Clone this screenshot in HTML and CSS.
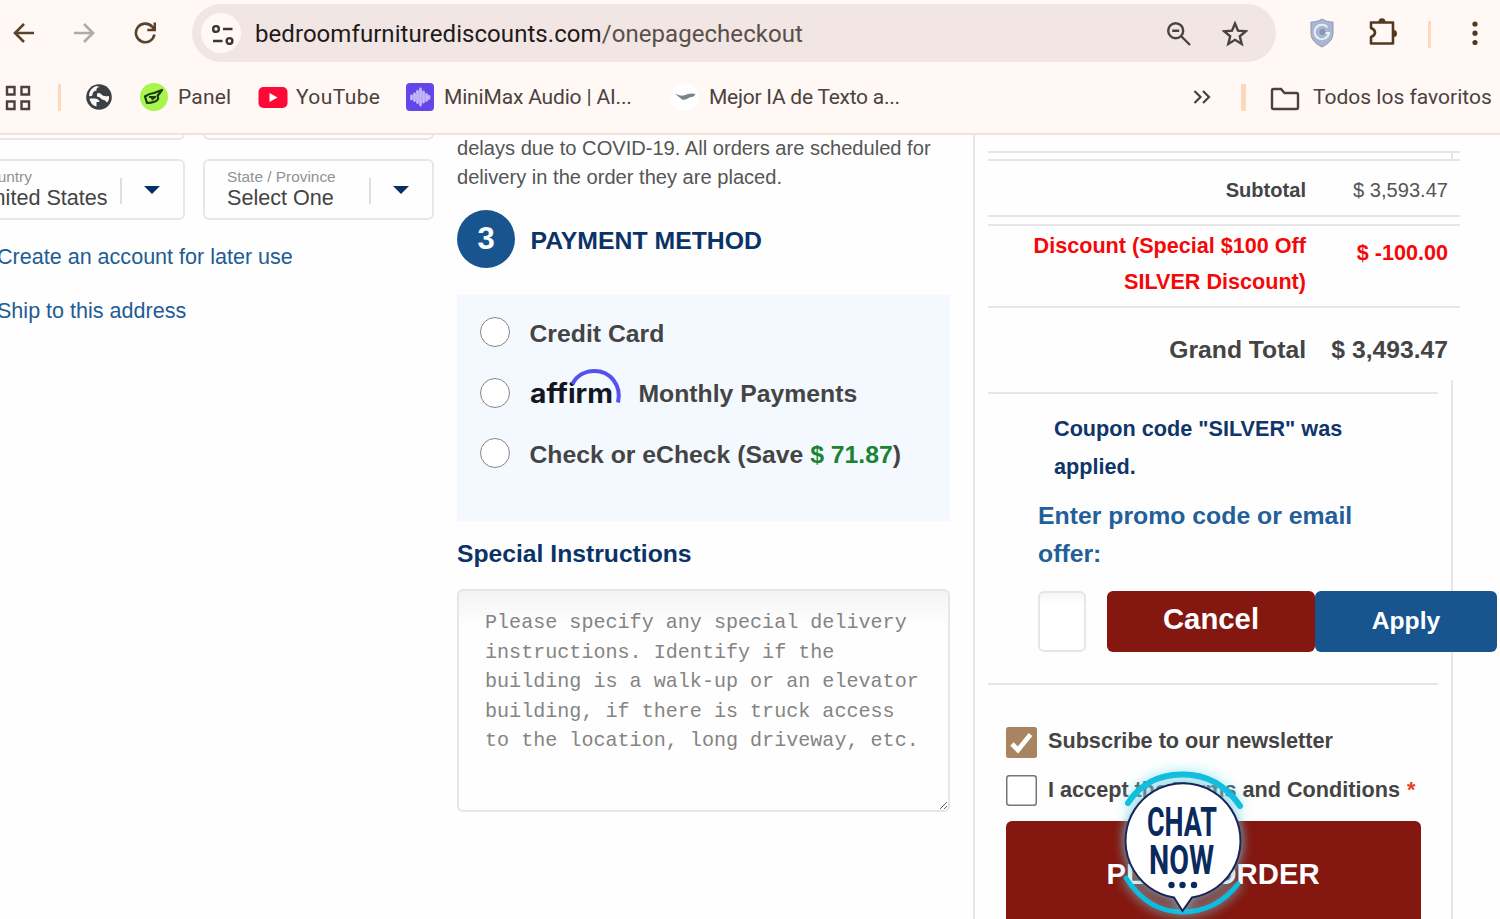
FILE: index.html
```html
<!DOCTYPE html>
<html lang="en">

<head>
    <meta charset="UTF-8">
    <meta name="viewport" content="width=device-width, initial-scale=1.0">
    <title>Checkout</title>
    <link rel="stylesheet" href="styles.css">
</head>

<body>
    <!-- browser bar -->
    <header class="browser">
        <div class="toolbar">
            <svg class="nav-icon back" viewBox="0 0 22 22"><path d="M21 11H2.5M11 2L2 11l9 9" /></svg>
            <svg class="nav-icon forward" viewBox="0 0 22 22"><path d="M1 11h18.500M11 2l9 9-9 9" /></svg>
            <svg class="nav-icon reload" viewBox="0 0 22 22"><path d="M20.400 12.500A9.300 9.300 0 1 1 18 4.500l2.600 3M20.800 0.500V8h-7.500" /></svg>
            <div class="address">
                <span class="site-info">
                    <svg viewBox="0 0 22 20"><circle cx="4" cy="4" r="2.900" /><path d="M11 4h9.500M1 16h9.500" /><circle cx="17.500" cy="16" r="2.900" /></svg>
                </span>
                <span class="url">bedroomfurniturediscounts.com<span class="path">/onepagecheckout</span></span>
                <svg class="zoom-icon" viewBox="0 0 24 24"><circle cx="8.700" cy="8.700" r="7.500" /><path d="M14 14l9 9M5.200 8.700h7" /></svg>
                <svg class="star-icon" viewBox="0 0 26 26"><path d="M13 2.500l3 7.200 7.800.6-6 5 1.900 7.700-6.700-4.200-6.700 4.200 1.900-7.700-6-5 7.800-.6z" /></svg>
            </div>
            <svg class="shield-icon" viewBox="0 0 24 30">
                <path d="M12 1c4 2.500 7.500 3 11 3v11c0 7-5 11-11 14C6 26 1 22 1 15V4c3.500 0 7-.5 11-3z" fill="#a9b6cf" stroke="#8d9ab5" />
                <path d="M17.500 9.500a7.200 7.200 0 1 0 1.500 5.500h-5" fill="none" stroke="#e9edf5" stroke-width="2" />
                <circle cx="12.500" cy="14" r="3" fill="#8696b6" />
            </svg>
            <svg class="puzzle-icon" viewBox="0 0 28 28">
                <path d="M2 4.500h22v21H2v-6.500q4-1.500 4-4.500T2 10z" fill="none" stroke="#51381f" stroke-width="2.600" stroke-linejoin="round" />
                <path d="M9.500 4a3.500 3.800 0 0 1 7 0zM24.500 12a3.500 3.500 0 0 1 0 7z" fill="#51381f" />
            </svg>
            <i class="sep"></i>
            <svg class="menu-icon" viewBox="0 0 6 24"><circle cx="3" cy="3" r="2.600" /><circle cx="3" cy="12.200" r="2.600" /><circle cx="3" cy="21.500" r="2.600" /></svg>
        </div>
        <div class="bookmarks">
            <svg class="apps-icon" viewBox="0 0 26 26"><path d="M2 2h7.500v7.500H2zM16.500 2H24v7.500h-7.500zM2 16.500h7.500V24H2zM16.500 16.500H24V24h-7.500z" /></svg>
            <i class="sep sep-apps"></i>
            <svg class="globe-icon" viewBox="0 0 26 26">
                <circle cx="13" cy="13" r="12.800" fill="#3a4045" />
                <path d="M14 3q-4 0-3.500 3.500-4 .5-4 4.500-1.500 2-3.500 1 0-7 7-10zM3.500 14.500h5q4.500 0 5 3.500h-3v4.500Q4.500 21 3.500 14.500zM11 9.500q3-1.500 4.500 1t7.500 1.500q.5 4-2 6.500-2-3-5-3-2.500-3-5-3z" fill="#fff8f5" />
            </svg>
            <span class="bookmark panel">
                <svg viewBox="0 0 28 28"><circle cx="14" cy="14" r="14" fill="#a8f64d" /><path d="M5 13.500q4-3 9-3.500l8-3-4.500 6q2 4-2.500 5.500-4 1.500-8 1.500zM9 14h6l-3.500 2.500" fill="none" stroke="#1d3a12" stroke-width="2.200" stroke-linejoin="round" /></svg>
                Panel
            </span>
            <span class="bookmark youtube">
                <svg viewBox="0 0 30 28"><rect x="0.500" y="4" width="29" height="21" rx="5" fill="#ff0838" /><path d="M11.500 10l8 4.500-8 4.500z" fill="#fff" /></svg>
                YouTube
            </span>
            <span class="bookmark minimax">
                <svg viewBox="0 0 28 28"><rect width="28" height="28" rx="4" fill="#6246ea" /><path d="M5.500 13v3M8.500 11v6.500M11.500 8.500v11M14.500 6v16M17.500 9v10M20.500 11.500v6M23 13.500v2" stroke="#c3b7fb" stroke-width="2.800" stroke-linecap="round" /></svg>
                MiniMax Audio | AI...
            </span>
            <span class="bookmark mejor">
                <svg viewBox="0 0 28 28"><circle cx="14" cy="14" r="14" fill="#fff" /><path d="M4 10.500q5 3 9.500 1.800 5-2.500 11-1.300-1 3-6 3.500-3 2-6.500 2.500-4-2.500-8-6.500z" fill="#7d8388" /></svg>
                Mejor IA de Texto a...
            </span>
            <svg class="more-icon" viewBox="0 0 18 14"><path d="M1.500 1l6 6-6 6M10 1l6 6-6 6" /></svg>
            <i class="sep sep-all"></i>
            <svg class="folder-icon" viewBox="0 0 30 24"><path d="M2 3.500q0-1.500 1.500-1.500h7.500l3.500 4H26.500q1.500 0 1.500 1.500V20.500q0 1.500-1.500 1.500h-23Q2 22 2 20.500z" /></svg>
            <span class="all-bookmarks">Todos los favoritos</span>
        </div>
    </header>

    <!-- checkout page -->
    <main class="page">
        <section class="billing">
            <div class="fields">
                <div class="field"></div>
                <div class="field"></div>
                <div class="field">
                    <div class="field-text"><label>Country</label><span>United States</span></div>
                    <i class="caret"></i>
                </div>
                <div class="field">
                    <div class="field-text"><label>State / Province</label><span>Select One</span></div>
                    <i class="caret"></i>
                </div>
            </div>
            <a class="link">Create an account for later use</a>
            <a class="link">Ship to this address</a>
        </section>

        <section class="payment">
            <p class="notice">delays due to COVID-19. All orders are scheduled for delivery in the order they are placed.</p>
            <h2 class="step"><span class="step-number">3</span><span class="step-title">PAYMENT METHOD</span></h2>
            <div class="methods">
                <label class="method"><i class="radio"></i><span>Credit Card</span></label>
                <label class="method"><i class="radio"></i>
                    <svg class="affirm" viewBox="0 0 94 40">
                        <text x="0" y="35.500" textLength="83" lengthAdjust="spacingAndGlyphs">affirm</text>
                        <path d="M42.500 17C47 8 56 4 64.500 4 80 4 92 18 88 35.500" />
                    </svg>
                    Monthly Payments</label>
                <label class="method"><i class="radio"></i><span>Check or eCheck (Save <b class="save">$ 71.87</b>)</span></label>
            </div>
            <h3 class="special">Special Instructions</h3>
            <textarea class="instructions" placeholder="Please specify any special delivery instructions. Identify if the building is a walk-up or an elevator building, if there is truck access to the location, long driveway, etc."></textarea>
        </section>

        <section class="summary">
            <div class="row-gap"></div>
            <div class="total subtotal"><b>Subtotal</b><span>$ 3,593.47</span></div>
            <div class="total discount"><b>Discount (Special $100 Off SILVER Discount)</b><b>$ -100.00</b></div>
            <div class="total grand"><b>Grand Total</b><b>$ 3,493.47</b></div>
            <div class="side">
                <div class="coupon">
                    <p class="applied">Coupon code "SILVER" was applied.</p>
                    <p class="promo">Enter promo code or email offer:</p>
                    <div class="promo-form">
                        <input class="promo-input" type="text">
                        <button class="btn cancel">Cancel</button>
                        <button class="btn apply">Apply</button>
                    </div>
                </div>
                <div class="confirm">
                    <label class="check">
                        <svg viewBox="0 0 31 31"><rect width="31" height="31" rx="2.500" fill="#a98461" /><path d="M6 17l6 6L24.500 7.500" fill="none" stroke="#fff" stroke-width="4.800" /></svg>
                        Subscribe to our newsletter
                    </label>
                    <label class="check">
                        <svg viewBox="0 0 31 31"><rect x="0.750" y="0.750" width="29.500" height="29.500" rx="2.500" fill="#fff" stroke="#767676" stroke-width="1.500" /></svg>
                        <span class="terms">I accept the Terms and Conditions <em>*</em></span>
                    </label>
                    <button class="btn order">PLACE ORDER</button>
                </div>
            </div>
        </section>
    </main>

    <!-- floating chat button -->
    <svg class="chat" viewBox="0 0 140 150">
        <path class="ring" d="M15 39Q33 11 69 10.500T127 42" />
        <path class="ring low" d="M13 114Q35 148 69 148T125 120" />
        <path class="bubble" d="M61 133.500A57.500 57.500 0 1 1 79 133.500L69.500 147z" />
        <text x="34" y="72" textLength="70" lengthAdjust="spacingAndGlyphs">CHAT</text>
        <text x="36" y="110" textLength="65" lengthAdjust="spacingAndGlyphs">NOW</text>
        <circle cx="58.500" cy="121" r="3.200" /><circle cx="69.500" cy="121" r="3.200" /><circle cx="81" cy="121" r="3.200" />
    </svg>
</body>

</html>
```
FILE: styles.css
```css
* {
    margin: 0;
    padding: 0;
    box-sizing: border-box;
}

body {
    width: 1500px;
    height: 919px;
    overflow: hidden;
    display: flex;
    flex-direction: column;
    background: #fefefe;
    color: #444;
    font-family: "Liberation Sans", Arial, sans-serif;
}
/* browser bar */

.browser {
    height: 135px;
    flex: none;
    background: #fff8f5;
    border-bottom: 2px solid #f5e1d5;
    font-family: Roboto, sans-serif;
    color: #4b423e;
}

.browser svg {
    flex: none;
}

.toolbar {
    height: 66px;
    display: flex;
    align-items: center;
}

.nav-icon {
    width: 22px;
    height: 22px;
    fill: none;
    stroke: #59422e;
    stroke-width: 2.6;
}

.back {
    margin-left: 13px;
}

.forward {
    margin-left: 38px;
    stroke: #b1aaa6;
}

.reload {
    margin-left: 39px;
}

.address {
    width: 1084px;
    height: 58px;
    margin-left: 36px;
    padding: 0 28px 0 9px;
    border-radius: 29px;
    background: #f1e6e4;
    display: flex;
    align-items: center;
}

.site-info {
    width: 40px;
    height: 40px;
    border-radius: 50%;
    background: #fff8f5;
    display: flex;
    align-items: center;
    justify-content: center;
}

.site-info svg {
    width: 22px;
    height: 20px;
    margin: 3px 0 0 3px;
    fill: none;
    stroke: #3d3633;
    stroke-width: 2.4;
}

.url {
    margin: 1px auto 0 14px;
    font-size: 24px;
    letter-spacing: 0.06px;
    color: #211a18;
}

.path {
    color: #594f4b;
}

.zoom-icon,
.star-icon {
    width: 24px;
    height: 24px;
    margin-top: 2px;
    fill: none;
    stroke: #4b4340;
    stroke-width: 2.4;
}

.star-icon {
    width: 26px;
    height: 26px;
    margin-left: 31px;
}

.shield-icon {
    width: 24px;
    height: 30px;
    margin-left: 34px;
}

.puzzle-icon {
    width: 28px;
    height: 28px;
    margin-left: 35px;
    margin-bottom: 3px;
}

.sep {
    width: 3px;
    height: 27px;
    flex: none;
    margin-left: 31px;
    margin-top: 3px;
    background: #fdd9bb;
}

.menu-icon {
    width: 6px;
    height: 24px;
    margin-left: 41px;
    fill: #51381f;
}

.bookmarks {
    height: 62px;
    display: flex;
    align-items: center;
    font-size: 21px;
    letter-spacing: 0.4px;
    white-space: nowrap;
}

.apps-icon {
    width: 26px;
    height: 26px;
    margin-left: 5px;
    margin-top: 2px;
    fill: none;
    stroke: #4b423e;
    stroke-width: 2.4;
}

.sep-apps {
    margin: 0 0 0 27px;
}

.globe-icon {
    width: 26px;
    height: 26px;
    margin-left: 25px;
}

.bookmark {
    display: flex;
    align-items: center;
}

.bookmark svg {
    width: 28px;
    height: 28px;
    margin-right: 10px;
}

.panel {
    width: 118px;
    margin-left: 28px;
    letter-spacing: 0.2px;
}

.youtube {
    width: 148px;
}

.youtube svg {
    width: 30px;
    margin-right: 8px;
}

.minimax {
    width: 265px;
    letter-spacing: -0.17px;
}

.mejor {
    width: 522px;
    letter-spacing: -0.25px;
}

.more-icon {
    width: 18px;
    height: 14px;
    fill: none;
    stroke: #4b423e;
    stroke-width: 2.2;
}

.sep-all {
    width: 5px;
    margin: 0 0 0 30px;
}

.folder-icon {
    width: 30px;
    height: 24px;
    margin: 3px 0 0 24px;
    fill: none;
    stroke: #4b423e;
    stroke-width: 2.4;
}

.all-bookmarks {
    margin-left: 13px;
    letter-spacing: 0;
}
/* page */

.page {
    flex: 1;
    min-height: 0;
    display: flex;
    overflow: hidden;
}

.billing {
    flex: none;
    width: 480px;
    margin: -56px 0 0 -46px;
}

.fields {
    display: grid;
    grid-template-columns: 231px 231px;
    grid-auto-rows: 61px;
    gap: 19px 18px;
    margin-bottom: 21px;
}

.field {
    display: flex;
    padding: 0 22px;
    border: 2px solid #e7e7e7;
    border-radius: 6px;
}

.field-text {
    flex: 1;
    padding-top: 7px;
}

.field-text label {
    display: block;
    font-size: 15.4px;
    line-height: 18px;
    color: #929292;
}

.field-text span {
    display: block;
    font-size: 21.6px;
    line-height: 24px;
}

.caret {
    width: 41px;
    height: 26px;
    margin-top: 17px;
    padding: 8px 0 0 22px;
    border-left: 2px solid #dedede;
}

.caret::before {
    content: "";
    display: block;
    width: 16px;
    height: 8px;
    background: #062f66;
    clip-path: polygon(0 0, 100% 0, 50% 100%);
}

.link {
    display: block;
    padding-left: 43px;
    font-size: 21.55px;
    line-height: 32px;
    margin-bottom: 21.5px;
    color: #215c94;
}

.payment {
    flex: none;
    width: 493px;
    margin-left: 23px;
}

.notice {
    margin-top: -1px;
    font-size: 20.1px;
    line-height: 29px;
    color: #555;
}

.step {
    height: 58px;
    display: flex;
    align-items: center;
    margin-top: 18px;
    font-size: 24.8px;
    color: #0a3368;
}

.step-number {
    width: 58px;
    height: 58px;
    margin-right: 15.5px;
    border-radius: 50%;
    background: #18548d;
    color: #fff;
    font-size: 31px;
    line-height: 57px;
    text-align: center;
}

.step-title {
    padding-top: 3px;
}

.methods {
    height: 226px;
    margin-top: 27px;
    padding: 8px 0 0 23px;
    background: #f4f9ff;
}

.method {
    height: 60.5px;
    display: flex;
    align-items: center;
    font-size: 24.75px;
    font-weight: bold;
    white-space: nowrap;
}

.method > span {
    padding-top: 2px;
}

.radio {
    width: 30px;
    height: 30px;
    margin: 0 19.5px 2px 0;
    border: 1.5px solid #858585;
    border-radius: 50%;
    background: #fff;
}

.affirm {
    width: 94px;
    height: 40px;
    margin: -14px 15px 0 0;
}

.affirm text {
    font-family: Inter, sans-serif;
    font-size: 26px;
    font-variant-ligatures: none;
    fill: #131722;
}

.affirm path {
    fill: none;
    stroke: #5551ee;
    stroke-width: 4;
}

.save {
    color: #188434;
}

.special {
    margin-top: 17px;
    font-size: 24.7px;
    line-height: 32px;
    color: #0a3368;
}

.instructions {
    display: block;
    width: 493px;
    height: 223px;
    margin-top: 19px;
    padding: 17px 26px;
    border: 2px solid #e6e6e6;
    border-radius: 6px;
    background: linear-gradient(#f4f4f4, #fefefe 36px);
    font-family: "Liberation Mono", "Courier New", monospace;
    font-size: 20.08px;
    line-height: 29.6px;
    overflow: hidden;
}

.instructions::placeholder {
    color: #848484;
}
/* order summary */

.summary {
    flex: none;
    width: 527px;
    margin-left: 23px;
    padding: 16px 0 0 13px;
    border-left: 2px solid #e6e6e6;
}

.row-gap {
    width: 472px;
    height: 10px;
    padding-right: 7px;
    border: solid #e6e6e6;
    border-width: 2px 0;
}

.row-gap::before {
    content: "";
    display: block;
    height: 6px;
    border-right: 2px solid #e6e6e6;
}

.total {
    width: 472px;
    display: grid;
    grid-template-columns: 1fr 142px;
    align-items: center;
    padding: 0 12px 0 38px;
    border-bottom: 2px solid #e6e6e6;
    text-align: right;
}

.subtotal {
    height: 56px;
    padding-top: 4px;
    font-size: 20.1px;
    color: #555;
}

.subtotal b {
    color: #444;
}

.discount {
    height: 84px;
    margin-top: 7px;
    border-top: 2px solid #e6e6e6;
    align-items: start;
    padding-top: 2px;
    font-size: 21.6px;
    line-height: 36px;
    color: #f40808;
}

.discount b + b {
    padding-top: 7px;
}

.grand {
    height: 72px;
    padding-top: 11px;
    border: 0;
    font-size: 24.7px;
}

.side {
    width: 465px;
    height: 539px;
    padding-top: 12px;
    border-right: 2px solid #e6e6e6;
}

.coupon {
    width: 450px;
    height: 293px;
    padding: 15.5px 0 0 50px;
    border: solid #e6e6e6;
    border-width: 2px 0;
    position: relative;
}

.applied {
    width: 340px;
    padding-left: 16px;
    font-size: 21.65px;
    line-height: 38px;
    font-weight: bold;
    color: #0f3569;
}

.promo {
    width: 340px;
    margin-top: 11px;
    font-size: 24.8px;
    line-height: 38px;
    font-weight: bold;
    color: #235f98;
}

.promo-form {
    display: flex;
    width: 460px;
    margin-top: 18px;
}

.promo-input {
    width: 48px;
    height: 61px;
    margin-right: 21px;
    border: 2px solid #e6e6e6;
    border-radius: 6px;
    background: linear-gradient(#f6f6f6, #fff 12px);
}

.btn {
    border: 0;
    border-radius: 6px;
    color: #fff;
    font-family: inherit;
    font-weight: bold;
}

.cancel {
    width: 208px;
    height: 61px;
    padding-bottom: 4px;
    background: #841710;
    font-size: 29.3px;
}

.apply {
    width: 182px;
    height: 61px;
    background: #18548d;
    font-size: 24.7px;
}

.confirm {
    padding: 42px 0 0 17.5px;
}

.check {
    display: flex;
    height: 48px;
    font-size: 21.65px;
    line-height: 28px;
    font-weight: bold;
}

.check svg {
    width: 31px;
    height: 31px;
    margin-right: 11.5px;
}

.terms {
    padding-top: 1px;
}

.check em {
    margin-left: 1px;
    color: #e8401c;
    font-style: normal;
}

.order {
    display: block;
    width: 415px;
    height: 106px;
    margin-top: -2px;
    background: #841710;
    font-size: 29.3px;
}
/* chat bubble lies over the page */

.chat {
    position: absolute;
    left: 1113px;
    top: 764px;
    width: 140px;
    height: 150px;
    overflow: visible;
}

.chat .ring {
    fill: none;
    stroke: #0bbde0;
    stroke-width: 6;
    stroke-linecap: round;
    filter: drop-shadow(0 0 6px #7fe4f5);
}

.chat .low {
    stroke-width: 5;
}

.chat .bubble {
    fill: #fff;
    stroke: #1b2459;
    stroke-width: 2;
    filter: drop-shadow(0 0 6px #6fc9dc);
}

.chat text,
.chat circle {
    fill: #0a2a5e;
}

.chat text {
    font-family: Roboto, sans-serif;
    font-size: 41px;
    font-weight: bold;
}
```
